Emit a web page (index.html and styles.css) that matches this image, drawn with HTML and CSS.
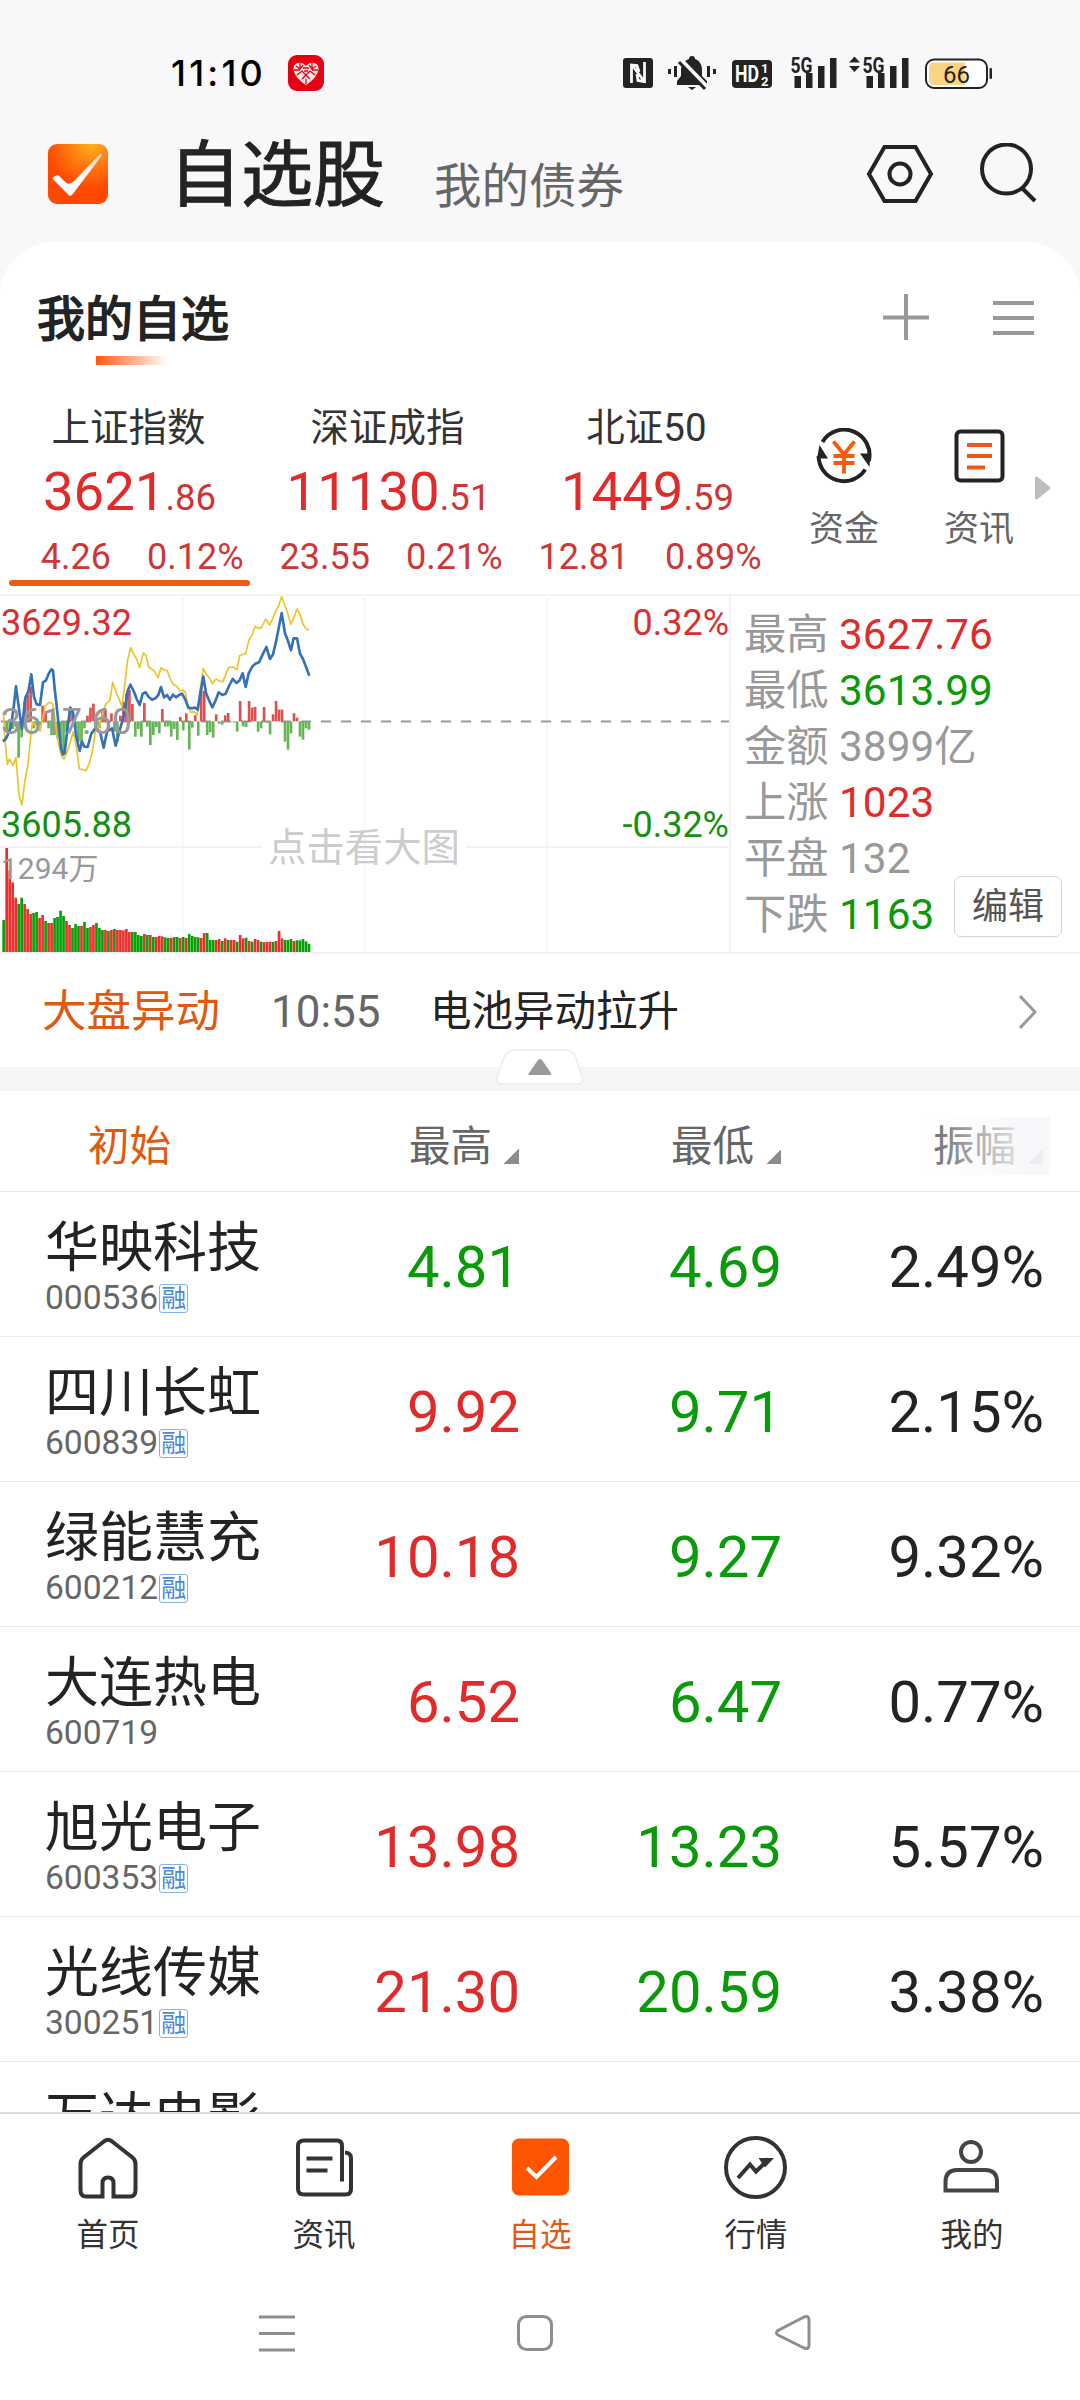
FILE: index.html
```
<!DOCTYPE html>
<html lang="zh-CN">
<head>
<meta charset="utf-8">
<title>自选股</title>
<link rel="stylesheet" href="styles.css">
</head>
<body>
<div class="phone">
  <div class="status">
    <span class="clock">11:10</span>
    <svg class="app-badge" width="36" height="36" viewBox="0 0 36 36">
      <rect width="36" height="36" rx="9" fill="#e60012"/>
      <path d="M18 30C12 26 5.500 20 5.500 13.500C5.500 7 14 5.500 18 11C22 5.500 30.500 7 30.500 13.500C30.500 20 24 26 18 30Z" fill="#fbe3e4"/>
      <path d="M6 15H12M24 15H30M9 20L14 16L18 20L22 16L27 20M12 8V13M24 8V13M14 24L18 20L22 24M8 11L12 14L15 10M28 11L24 14L21 10M18 24V29M16 16H20M15 13H21" stroke="#e60012" stroke-width="1.300" fill="none"/>
    </svg>
    <svg class="status-icons" width="372" height="38" viewBox="622 53 372 38">
      <g fill="#232323">
        <rect x="623" y="57" width="30" height="30" rx="3"/>
        <path d="M631.500 82V64L637 64.500 639 71M637 73L638 79.500 644.500 80.500V61M632 64L644 80" fill="none" stroke="#f8f8fb" stroke-width="2.800"/>
        <path d="M692 55a3 3 0 0 1 3 3c5 2 7 6 7 11v6l5 5v4H677v-4l4-5v-6c0-5 3-9 8-11a3 3 0 0 1 3-3zM688 86h8l-4 3z"/>
        <path d="M680 59L706 86" stroke="#f8f8fb" stroke-width="6"/>
        <path d="M679 61L705 88" stroke="#232323" stroke-width="3"/>
        <path d="M669.500 68v5M675.500 65v11M708.500 65v11M714.500 68v5" stroke="#232323" stroke-width="3"/>
        <rect x="732" y="59" width="40" height="28" rx="4"/>
        <path d="M794.500 75h6.500v12h-6.500zM806 72h6.500v15H806zM818 65h6.500v22H818zM830 57h6.500v30H830z"/>
        <path d="M866.500 75h6.500v12h-6.500zM878 72h6.500v15H878zM890 65h6.500v22H890zM902 57h6.500v30H902z"/>
        <path d="M849 61.500l5.500-6 5.500 6zM849 65l5.500 6 5.500-6z"/>
        <rect x="989.500" y="67" width="2.500" height="11" rx="1"/>
      </g>
      <text x="735" y="81" class="st-hd" textLength="24" lengthAdjust="spacingAndGlyphs">HD</text>
      <text x="761" y="72" class="st-tiny">1</text>
      <text x="761" y="84.500" class="st-tiny">2</text>
      <text x="790.500" y="71.500" class="st-5g" textLength="22" lengthAdjust="spacingAndGlyphs">5G</text>
      <text x="862.500" y="71.500" class="st-5g" textLength="22" lengthAdjust="spacingAndGlyphs">5G</text>
      <rect x="926" y="58.500" width="61" height="28.500" rx="8" fill="#fff" stroke="#232323" stroke-width="2"/>
      <path d="M934 61.500H965V84H934a5 5 0 0 1-5-5V66.500a5 5 0 0 1 5-5z" fill="#fcd283"/>
      <text x="956.500" y="81.500" text-anchor="middle" class="st-batt">66</text>
    </svg>
  </div>

  <header class="top">
    <svg class="logo" width="60" height="60" viewBox="0 0 60 60">
      <defs>
        <radialGradient id="lg" cx=".72" cy="0" r=".75"><stop offset="0" stop-color="#ffb21c"/><stop offset=".5" stop-color="#ff7a10"/><stop offset="1" stop-color="#ff4800"/></radialGradient>
        <linearGradient id="ck" x1="0" y1="1" x2="1" y2="0"><stop offset="0" stop-color="#fff"/><stop offset=".5" stop-color="#fff"/><stop offset="1" stop-color="#ffc89a"/></linearGradient>
      </defs>
      <rect width="60" height="60" rx="9" fill="url(#lg)"/>
      <path d="M4.500 34Q9 29 11.500 32L18 38.500Q21.500 41 26 37L52 9.500Q55.500 7.500 54 12L25 50Q22 54 19.500 50L5 35.500Z" fill="url(#ck)" stroke="#c93c00" stroke-opacity=".35"/>
    </svg>
    <h1 class="title">自选股</h1>
    <span class="subtitle">我的债券</span>
    <svg class="hex" width="68" height="62" viewBox="866 143 68 62" fill="none" stroke="#232323" stroke-width="4"><path d="M884.500 147H915.500L931 174 915.500 201H884.500L869 174Z"/><circle cx="900" cy="174" r="10.500"/></svg>
    <svg class="search" width="60" height="62" viewBox="979 143 60 62" fill="none" stroke="#232323" stroke-width="4"><circle cx="1006.500" cy="169" r="24.500"/><path d="M1022 188L1035 201"/></svg>
  </header>

  <main class="card">
    <div class="group">
      <h2 class="group-name">我的自选</h2>
      <svg class="plus" width="46" height="46" viewBox="0 0 46 46" stroke="#999" stroke-width="4"><path d="M0 23.500H46M23 0V46"/></svg>
      <svg width="42" height="46" viewBox="0 0 42 46" stroke="#999" stroke-width="4"><path d="M0 9H41M0 24H41M0 39H41"/></svg>
    </div>

    <section class="indices">
      <div class="index active">
        <div class="index-name">上证指数</div>
        <div class="index-value">3621<small>.86</small></div>
        <div class="index-change"><span>4.26</span><span>0.12%</span></div>
      </div>
      <div class="index">
        <div class="index-name">深证成指</div>
        <div class="index-value">11130<small>.51</small></div>
        <div class="index-change"><span>23.55</span><span>0.21%</span></div>
      </div>
      <div class="index">
        <div class="index-name">北证50</div>
        <div class="index-value">1449<small>.59</small></div>
        <div class="index-change"><span>12.81</span><span>0.89%</span></div>
      </div>
      <div class="tool">
        <svg width="56" height="56" viewBox="816 428 56 56" fill="none">
          <path d="M822.500 442A25.300 25.300 0 0 1 868.800 461M865.200 469.500A25.300 25.300 0 0 1 818.600 456" stroke="#232323" stroke-width="4"/>
          <path d="M819.500 445L828 458.500H817Z M869.500 467L860 453.500H870.500Z" fill="#232323"/>
          <path d="M833.500 441.500L844 454.500 854.500 441.500M844 454V473.500M833.500 456H854.500M833.500 463H854.500" stroke="#f55a0c" stroke-width="3.800"/>
        </svg>
        <span>资金</span>
      </div>
      <div class="tool tool-news">
        <svg width="56" height="56" viewBox="951 428 56 56" fill="none"><rect x="956.500" y="431.500" width="46" height="49" rx="4" stroke="#232323" stroke-width="4"/><path d="M967 445H992M967 456H992M967 467.500H985" stroke="#e8591a" stroke-width="4"/></svg>
        <span>资讯</span>
      </div>
      <svg class="more" width="16" height="24" viewBox="0 0 16 24"><path d="M0 2Q0 0 2 0.500L15 11Q16 12 15 13L2 23.500Q0 24 0 22Z" fill="#bdbdbd"/></svg>
    </section>

    <section class="market">
      <svg class="chart" id="chart" width="729" height="360" viewBox="0 0 729 360">
        <path d="M183 0V358M364.500 0V358M547 0V358" stroke="#f8f8f8" stroke-width="2"/>
        <path d="M0 253H262M466 253H729" stroke="#f3f3f3" stroke-width="2"/>
        <path d="M1 127.500H729" stroke="#999" stroke-width="2" stroke-dasharray="10 10"/>
        <g transform="scale(.33333) translate(0 -27)">
          <g id="net"></g>
          <path fill="none" stroke="#edc32a" stroke-width="5" stroke-linejoin="round" d="M10 380L15 465 22 538 28 522 39 542 48 518 57 630 66 659 75 585 84 540 92 455 97 412 110 425 120 438 128 400 136 362 148 352 158 356 166 410 174 470 184 512 192 522 202 500 220 440 230 490 238 552 248 553 258 557 268 535 277 500 286 440 297 425 308 385 317 358 330 345 338 292 350 325 366 364 374 300 383 225 392 188 402 210 410 222 419 248 430 204 438 212 446 246 456 252 464 260 474 278 483 248 492 255 502 257 510 280 520 298 530 304 540 318 548 315 556 322 563 360 572 382 582 380 592 390 601 310 610 250 619 268 629 280 637 296 648 282 658 288 668 290 676 272 686 247 700 246 711 254 719 212 729 208 737 206 747 165 757 148 765 124 775 130 784 128 797 102 809 120 818 100 827 80 836 62 845 35 854 60 864 88 872 118 881 100 891 72 900 88 909 118 918 131 927 135"/>
          <path fill="none" stroke="#3572b8" stroke-width="8" stroke-linejoin="round" d="M8 468L16 464 24 448 32 428 40 375 48 304 56 365 66 432 76 338 85 320 94 268 102 336 110 358 120 360 129 292 138 286 146 266 154 253 159 256 164 310 174 400 183 490 189 509 194 504 203 425 211 368 219 382 229 455 239 498 246 470 253 485 263 486 274 446 286 430 300 440 311 488 321 440 336 430 347 482 360 432 372 390 383 318 391 299 401 318 410 342 419 360 428 326 437 322 446 336 456 344 466 340 475 330 483 306 492 337 501 330 510 344 519 329 528 337 537 330 546 326 556 344 565 368 575 370 585 368 593 374 601 325 610 275 618 324 628 348 637 367 647 346 656 322 667 330 677 326 687 303 698 282 710 294 719 286 728 265 737 306 746 265 757 245 766 236 777 232 788 208 799 186 810 222 819 208 828 170 836 130 845 84 855 145 864 168 873 196 881 160 891 160 900 206 909 222 918 245 928 272"/>
          <g id="volume"></g>
        </g>
        <text x="1" y="41" class="c36 up">3629.32</text>
        <text x="1" y="140" class="c36 base">3617.60</text>
        <text x="1" y="242.500" class="c36 down">3605.88</text>
        <text x="1" y="285" class="c30">1294万</text>
        <text x="729" y="41" class="c36 up" text-anchor="end">0.32%</text>
        <text x="729" y="242.500" class="c36 down" text-anchor="end">-0.32%</text>
        <text x="268" y="267" class="hint">点击看大图</text>
      </svg>
      <div class="stats">
        <div>最高 <b class="up">3627.76</b></div>
        <div>最低 <b class="down">3613.99</b></div>
        <div>金额 3899亿</div>
        <div>上涨 <b class="up">1023</b></div>
        <div>平盘 132</div>
        <div>下跌 <b class="down">1163</b></div>
        <button class="edit">编辑</button>
      </div>
    </section>

    <section class="news">
      <span class="news-tag">大盘异动</span>
      <span class="news-time">10:55</span>
      <span class="news-text">电池异动拉升</span>
      <svg width="20" height="34" viewBox="0 0 20 34" fill="none" stroke="#999" stroke-width="3"><path d="M2 1L17 17 2 33"/></svg>
    </section>
    <div class="divider">
      <svg class="fold" width="90" height="38" viewBox="495 1048 90 38"><path d="M516 1050H565Q573 1050 576 1058L582 1077Q584 1084 577 1084H503Q495 1084 497 1077L504 1058Q507 1050 516 1050Z" fill="#fff" stroke="#ececec" stroke-width="1.500"/><path d="M538 1060Q540 1058 542 1060L551 1073Q552 1075 549 1075H530Q527 1075 529 1073Z" fill="#999"/></svg>
    </div>

    <section class="table">
      <div class="thead">
        <span class="th-first">初始</span>
        <span class="th">最高<i></i></span>
        <span class="th">最低<i></i></span>
        <span class="th th-fade">振幅<i></i></span>
      </div>
      <div class="row"><div class="stock"><b>华映科技</b><span>000536<em>融</em></span></div><span class="down">4.81</span><span class="down">4.69</span><span>2.49%</span></div>
      <div class="row"><div class="stock"><b>四川长虹</b><span>600839<em>融</em></span></div><span class="up">9.92</span><span class="down">9.71</span><span>2.15%</span></div>
      <div class="row"><div class="stock"><b>绿能慧充</b><span>600212<em>融</em></span></div><span class="up">10.18</span><span class="down">9.27</span><span>9.32%</span></div>
      <div class="row"><div class="stock"><b>大连热电</b><span>600719</span></div><span class="up">6.52</span><span class="down">6.47</span><span>0.77%</span></div>
      <div class="row"><div class="stock"><b>旭光电子</b><span>600353<em>融</em></span></div><span class="up">13.98</span><span class="down">13.23</span><span>5.57%</span></div>
      <div class="row"><div class="stock"><b>光线传媒</b><span>300251<em>融</em></span></div><span class="up">21.30</span><span class="down">20.59</span><span>3.38%</span></div>
      <div class="row"><div class="stock"><b>万达电影</b></div></div>
    </section>
  </main>

  <nav class="tabs">
    <div class="tab"><svg width="66" height="66" viewBox="0 0 66 66" fill="none" stroke="#333" stroke-width="4"><path d="M29 60.500H11Q5.500 60.500 5.500 54V28Q5.500 24 8.500 21.500L29.500 5Q33 2.500 36.500 5L57.500 21.500Q60.500 24 60.500 28V54Q60.500 60.500 55 60.500H38.500V47Q38.500 41.500 33 41.500 27.500 41.500 27.500 47V62.500M38.500 62.500V47"/></svg><span>首页</span></div>
    <div class="tab"><svg width="66" height="66" viewBox="0 0 66 66" fill="none" stroke="#333" stroke-width="4"><path d="M51 45.500V10Q51 4.500 46 4.500H13Q7 4.500 7 10V53Q7 58.500 13 58.500H54.500Q60 58.500 60 53V22Q60 17 54 16.500M15.500 22.500H41.500M15.500 34.500H36.500"/></svg><span>资讯</span></div>
    <div class="tab on"><svg width="66" height="66" viewBox="0 0 66 66"><rect x="5" y="2.500" width="57" height="57" rx="7" fill="#ff5500"/><path d="M20 32L29.500 41 49 21" fill="none" stroke="#fff" stroke-width="4"/></svg><span>自选</span></div>
    <div class="tab"><svg width="66" height="66" viewBox="0 0 66 66" fill="none" stroke="#333" stroke-width="4"><circle cx="32.500" cy="31.500" r="29.500"/><path d="M15 42L27 28.500 33 35.500 46 23"/><path d="M35.500 22H51L42 31.500Z" fill="#333" stroke="none"/></svg><span>行情</span></div>
    <div class="tab"><svg width="66" height="66" viewBox="0 0 66 66" fill="none" stroke="#444" stroke-width="4"><circle cx="32" cy="16" r="10"/><path d="M6.500 54.500V46Q6.500 34 18 34H46.500Q58 34 58 46V54.500Z"/></svg><span>我的</span></div>
  </nav>

  <div class="sysnav">
    <svg width="36" height="38" viewBox="0 0 36 38" stroke="#8e8e8e" stroke-width="3"><path d="M0 3H36M0 19.500H36M0 36H36"/></svg>
    <svg width="36" height="38" viewBox="0 0 36 38" fill="none" stroke="#8e8e8e" stroke-width="3"><rect x="1.500" y="2.500" width="33" height="33" rx="8"/></svg>
    <svg width="36" height="38" viewBox="0 0 36 38" fill="none" stroke="#8e8e8e" stroke-width="3"><path d="M29 3Q34 1 34 6V31Q34 36 29 34L3 21Q0 19 3 16.500Z"/></svg>
  </div>
</div>
<script src="chart.js"></script>
</body>
</html>
```
FILE: styles.css
```
* { box-sizing: border-box; }
body {
  margin: 0;
  width: 1080px;
  height: 2400px;
  overflow: hidden;
  background: #f8f8fb;
  color: #232323;
  font-family: Roboto, "Noto Sans CJK SC", sans-serif;
}
svg { display: block; flex: none; }
h1, h2, b { margin: 0; font-weight: 400; }
.phone { display: flex; flex-direction: column; height: 2400px; }
.up { color: #e12b2b; fill: #d63031; }
.down { color: #089a08; fill: #149114; }

.status { height: 110px; display: flex; align-items: center; padding: 36px 86px 0 171px; }
.clock { width: 117px; font: 500 36px/40px Inter, sans-serif; letter-spacing: 3.2px; color: #000; white-space: nowrap; }
.status-icons { margin-left: auto; }
.st-hd { font: 700 23px Roboto, sans-serif; fill: #fff; }
.st-tiny { font: 700 13px Roboto, sans-serif; fill: #fff; }
.st-5g { font: 700 22px Roboto, sans-serif; fill: #232323; }
.st-batt { font: 400 24px Roboto, sans-serif; fill: #232323; }

.top { height: 132px; display: flex; align-items: flex-start; padding: 33px 41px 0 48px; }
.logo { margin-top: 1px; }
.title { margin-left: 61px; font-size: 72px; line-height: 72px; margin-top: -3px; -webkit-text-stroke: 1px #232323; }
.subtitle { margin-left: 49px; font-size: 47.500px; line-height: 60px; margin-top: 14px; color: #666; }
.hex { margin-left: auto; }
.search { margin-left: 45px; }

.card { flex: none; height: 1870px; background: #fff; border-radius: 54px 54px 0 0; overflow: hidden; display: flex; flex-direction: column; }
.group { flex: none; height: 153px; display: flex; padding: 52px 45px 0 37px; align-items: flex-start; }
.group-name { font-size: 48px; line-height: 52px; padding-bottom: 19px; -webkit-text-stroke: 1.6px #232323; background: linear-gradient(90deg, #ff5a0a, #fff) 59px 62px / 72px 9px no-repeat; }
.group .plus { margin-left: auto; margin-right: 64px; }

.indices { flex: none; height: 199px; display: flex; position: relative; }
.index { width: 259px; padding-top: 7px; text-align: center; position: relative; }
.index-name { font-size: 38.500px; line-height: 52px; color: #333; padding-right: 2px; }
.index-value { font-size: 54.500px; line-height: 60px; margin-top: 7px; height: 60px; color: #e12b2b; }
.index-value small { font-size: 36.500px; color: #d13434; }
.index-change { font-size: 36px; line-height: 44px; margin-top: 14px; display: flex; gap: 36px; color: #cf3636; }
.index-change span:first-child { width: 111px; display: flex; justify-content: flex-end; }
.index.active::after { content: ""; position: absolute; left: 9px; bottom: 8px; width: 241px; height: 6px; border-radius: 3px; background: #f05a14; }
.tool { margin-left: 31px; width: 72px; display: flex; flex-direction: column; align-items: center; padding-top: 33px; font-size: 35px; line-height: 44px; color: #666; }
.tool span { margin-top: 24px; }
.tool-news { margin-left: 63px; }
.more { margin: 81px 0 0 20px; }

.market { flex: none; height: 360px; display: flex; border-top: 2px solid #f3f3f3; border-bottom: 2px solid #f3f3f3; }
.chart { margin-top: -2px; }
.c36 { font-size: 36px; }
.base { fill: #999; }
.c30 { font-size: 30px; fill: #999; }
.hint { font-size: 38.400px; fill: #ccc; }
.stats { flex: 1; border-left: 2px solid #f3f3f3; padding: 11px 0 0 13px; font-size: 42.300px; line-height: 56px; color: #999; position: relative; white-space: nowrap; }
.edit { position: absolute; right: 18px; bottom: 15px; width: 108px; height: 61px; border: 1.5px solid #d4d4d4; border-radius: 7px; background: #fff; color: #555; font: 36px/58px Roboto, "Noto Sans CJK SC", sans-serif; padding: 0; }

.news { flex: none; height: 113px; display: flex; align-items: center; padding: 2px 42px 0 42px; line-height: 56px; }
.news-tag { font-size: 44.500px; color: #df590f; width: 229px; }
.news-time { font-size: 44px; color: #666; width: 159px; }
.news-text { font-size: 41.500px; flex: 1; }
.divider { flex: none; height: 24px; background: #f6f6f7; position: relative; }
.fold { position: absolute; left: 495px; top: -19px; }

.table { flex: none; }
.thead { height: 101px; border-bottom: 1px solid #e6e6e6; display: flex; align-items: center; padding: 12px 32px 0 88px; font-size: 41.500px; line-height: 58px; color: #666; }
.th-first { color: #df590f; width: 169px; }
.th { width: 262px; display: flex; justify-content: flex-end; position: relative; }
.th i { width: 15px; height: 15px; margin: 31px 0 0 12px; background: linear-gradient(135deg, transparent 50%, #8b8b90 50%); }
.th-fade::after { content: ""; position: absolute; right: -7px; top: -1px; width: 126px; height: 58px; background: linear-gradient(90deg, rgba(246,247,250,0), rgba(246,247,250,.9) 80%); }
.row { height: 145px; border-bottom: 1px solid #ececec; display: grid; grid-template-columns: 213px 262px 262px 262px; padding-left: 45px; font-size: 58px; line-height: 64px; }
.row > span { text-align: right; padding-top: 43px; }
.stock { display: flex; flex-direction: column; white-space: nowrap; }
.stock b { font-size: 54px; line-height: 60px; margin-top: 27px; }
.stock span { font-size: 33.600px; line-height: 36px; color: #666; display: flex; align-items: center; margin-top: 1px; }
.stock em { font-style: normal; font-size: 25px; line-height: 27px; width: 29px; height: 29px; text-align: center; border: 1.5px solid #86b3e4; border-radius: 3px; color: #4b8bd6; margin-left: 1px; display: flex; justify-content: center; }

.tabs { height: 160px; background: #fff; border-top: 2px solid #dcdcdc; display: flex; flex: none; }
.tab { flex: 1; display: flex; flex-direction: column; align-items: center; padding-top: 22px; font-size: 31.500px; line-height: 40px; color: #333; }
.tab span { margin-top: 14px; }
.tab.on { color: #e0591a; }
.sysnav { flex: 1; background: #fff; display: flex; padding: 42px 0 0 259px; gap: 222px; }
```
FILE: chart.js
```
const NS = 'http://www.w3.org/2000/svg';
function bar(parent, x, y, w, h, fill) {
  const r = document.createElementNS(NS, 'rect');
  r.setAttribute('x', x); r.setAttribute('y', y);
  r.setAttribute('width', w); r.setAttribute('height', h);
  r.setAttribute('fill', fill);
  parent.appendChild(r);
}

// Volume per interval: top edge and direction, baseline at 1101
const volume = '1005g 789r 856r 892r 938r 957g 938g 957r 972r 987r 984g 981g 999r 990r 1008g 1014r 1014r 999g 996g 977g 993g 1008r 1020r 1029g 1017g 1023g 1023r 1011g 1029g 1026r 1020r 1014g 1029g 1035g 1035r 1038g 1035r 1032g 1035r 1035r 1036r 1032r 1041r 1041g 1041g 1050g 1053g 1047r 1050g 1050r 1056g 1056r 1053r 1054r 1057g 1059g 1059r 1056g 1056g 1059r 1056g 1059r 1047g 1053g 1056g 1057g 1059r 1044r 1044g 1065g 1065g 1065r 1062r 1068g 1060r 1065g 1065r 1065r 1070g 1050r 1060r 1058g 1068r 1070g 1062r 1065r 1070g 1071r 1071r 1070r 1071g 1068r 1038r 1060r 1065g 1065g 1062g 1068r 1066g 1066g 1062g 1069g 1076g'.split(' ');
const vol = document.getElementById('volume');
volume.forEach((s, i) => {
  const top = parseInt(s, 10);
  bar(vol, 7 + i * 8.98, top, 8, 1101 - top, s.endsWith('r') ? '#ee2e2e' : '#07a007');
});

// Net buying strength around the zero line at 409
const net = {1:440,2:445,3:432,4:425,5:518,6:457,7:350,8:330,9:305,10:430,11:420,12:420,13:362,14:380,15:430,16:450,17:450,18:460,19:470,20:505,21:440,22:372,23:380,24:430,25:470,26:482,27:430,28:392,29:368,30:356,31:425,32:430,33:380,34:375,35:435,36:385,37:440,38:470,39:392,40:350,41:325,42:315,43:357,44:455,45:432,46:455,47:354,48:425,49:480,50:450,51:426,52:445,53:372,54:425,55:424,56:455,57:432,58:465,59:396,60:436,61:385,62:494,63:428,64:391,65:452,66:310,67:318,68:450,69:442,70:458,71:388,72:416,73:419,74:391,75:384,76:410,77:412,78:440,79:348,80:424,81:426,82:348,83:368,84:366,85:440,86:430,87:366,88:413,89:448,90:388,91:348,92:374,93:374,94:470,95:494,96:445,97:385,98:398,99:455,100:464,101:430,102:434};
const netGroup = document.getElementById('net');
for (const [i, y] of Object.entries(net)) {
  bar(netGroup, 7 + i * 8.98, Math.min(y, 409), 8, Math.abs(y - 409), y < 409 ? '#dc5050' : '#62b653');
}
```
